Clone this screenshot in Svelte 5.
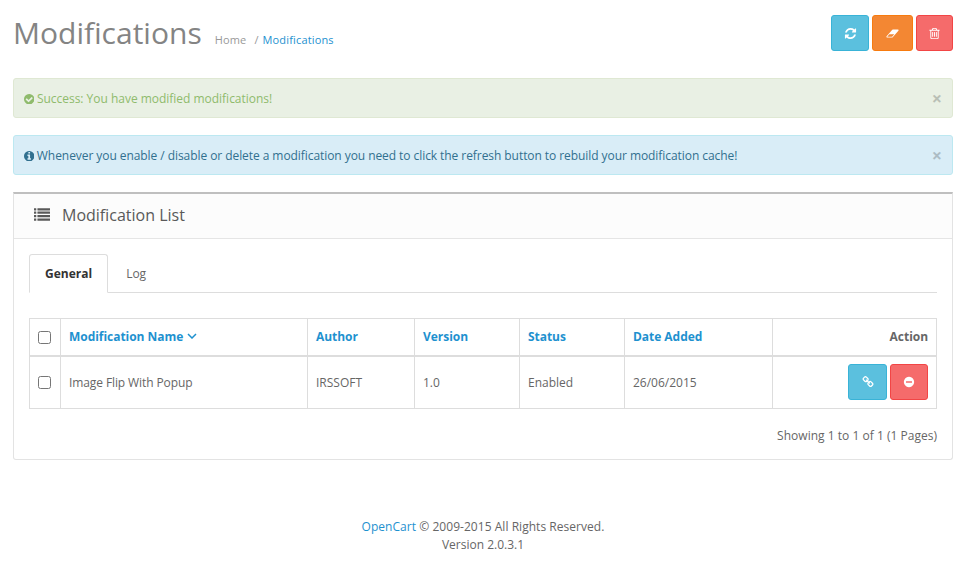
<script>
  const icons = {
    check: 'M1412 734q0-28-18-46l-91-90q-19-19-45-19t-45 19l-408 407-226-226q-19-19-45-19t-45 19l-91 90q-18 18-18 46 0 27 18 45l362 362q19 19 45 19 27 0 46-19l543-543q18-18 18-45zm252 162q0 209-103 385.500t-279.500 279.500-385.500 103-385.500-103-279.500-279.500-103-385.500 103-385.500 279.500-279.500 385.500-103 385.500 103 279.500 279.500 103 385.500z',
    info: 'M1152 1376v-160q0-14-9-23t-23-9h-96v-512q0-14-9-23t-23-9h-320q-14 0-23 9t-9 23v160q0 14 9 23t23 9h96v320h-96q-14 0-23 9t-9 23v160q0 14 9 23t23 9h448q14 0 23-9t9-23zm-128-896v-160q0-14-9-23t-23-9h-192q-14 0-23 9t-9 23v160q0 14 9 23t23 9h192q14 0 23-9t9-23zm640 416q0 209-103 385.500t-279.500 279.500-385.500 103-385.500-103-279.500-279.500-103-385.500 103-385.500 279.500-279.500 385.500-103 385.500 103 279.500 279.500 103 385.500z',
    minus: 'M1344 960v-128q0-26-19-45t-45-19h-768q-26 0-45 19t-19 45v128q0 26 19 45t45 19h768q26 0 45-19t19-45zm320-64q0 209-103 385.500t-279.500 279.500-385.500 103-385.500-103-279.500-279.500-103-385.500 103-385.500 279.500-279.500 385.500-103 385.500 103 279.500 279.500 103 385.500z',
    refresh: 'M1639 1056q0 5-1 7-64 268-268 434.500t-478 166.500q-146 0-282.500-55t-243.500-157l-129 129q-19 19-45 19t-45-19-19-45v-448q0-26 19-45t45-19h448q26 0 45 19t19 45-19 45l-137 137q71 66 161 102t187 36q134 0 250-65t186-179q11-17 53-117 8-23 30-23h192q13 0 22.500 9.500t9.500 22.500zm25-800v448q0 26-19 45t-45 19h-448q-26 0-45-19t-19-45 19-45l138-138q-148-137-349-137-134 0-250 65t-186 179q-11 17-53 117-8 23-30 23h-199q-13 0-22.500-9.500t-9.500-22.500v-7q65-268 270-434.500t480-166.500q146 0 284 55.500t245 156.500l130-129q19-19 45-19t45 19 19 45z',
    trash: 'M704 736v576q0 14-9 23t-23 9h-64q-14 0-23-9t-9-23v-576q0-14 9-23t23-9h64q14 0 23 9t9 23zm256 0v576q0 14-9 23t-23 9h-64q-14 0-23-9t-9-23v-576q0-14 9-23t23-9h64q14 0 23 9t9 23zm256 0v576q0 14-9 23t-23 9h-64q-14 0-23-9t-9-23v-576q0-14 9-23t23-9h64q14 0 23 9t9 23zm128 724v-948h-896v948q0 22 7 40.500t14.500 27 10.500 8.500h832q3 0 10.500-8.500t14.500-27 7-40.500zm-672-1076h448l-48-117q-7-9-17-11h-317q-10 2-17 11zm928 32v64q0 14-9 23t-23 9h-96v948q0 83-47 143.500t-113 60.500h-832q-66 0-113-58.500t-47-141.500v-952h-96q-14 0-23-9t-9-23v-64q0-14 9-23t23-9h309l70-167q15-37 54-63t79-26h320q40 0 79 26t54 63l70 167h309q14 0 23 9t9 23z',
    link: 'M1520 1216q0-40-28-68l-208-208q-28-28-68-28-42 0-72 32 3 3 19 18.500t21.500 21.500 15 19 13 25.500 3.500 27.500q0 40-28 68t-68 28q-15 0-27.500-3.500t-25.500-13-19-15-21.500-21.500-18.500-19q-33 31-33 73 0 40 28 68l206 207q27 27 68 27 40 0 68-26l147-146q28-28 28-67zm-703-705q0-40-28-68l-206-207q-28-28-68-28-39 0-68 27l-147 146q-28 28-28 67 0 40 28 68l208 208q27 27 68 27 42 0 72-31-3-3-19-18.500t-21.500-21.500-15-19-13-25.500-3.500-27.500q0-40 28-68t68-28q15 0 27.500 3.500t25.500 13 19 15 21.500 21.500 18.500 19q33-31 33-73zm895 705q0 120-85 203l-147 146q-83 83-203 83-121 0-204-85l-206-207q-83-83-83-203 0-123 88-209l-88-88q-86 88-208 88-120 0-204-84l-208-208q-84-84-84-204t85-203l147-146q83-83 203-83 121 0 204 85l206 207q83 83 83 203 0 123-88 209l88 88q86-88 208-88 120 0 204 84l208 208q84 84 84 204z',
    eraser: 'M960 1408l336-384h-768l-336 384h768zm1013-1077q15 34 9.500 71.500t-30.500 65.500l-896 1024q-38 44-96 44h-768q-38 0-69.500-20.500t-47.500-54.500q-15-34-9.500-71.500t30.500-65.500l896-1024q38-44 96-44h768q38 0 70 20.500t47 54.500z',
    list: 'M256 1312v192q0 13-9.500 22.500t-22.500 9.500h-192q-13 0-22.500-9.500t-9.500-22.500v-192q0-13 9.500-22.500t22.500-9.500h192q13 0 22.500 9.500t9.500 22.500zm0-384v192q0 13-9.500 22.500t-22.500 9.500h-192q-13 0-22.500-9.500t-9.500-22.500v-192q0-13 9.500-22.500t22.500-9.500h192q13 0 22.500 9.500t9.500 22.500zm0-384v192q0 13-9.500 22.500t-22.500 9.500h-192q-13 0-22.500-9.500t-9.500-22.500v-192q0-13 9.500-22.500t22.500-9.500h192q13 0 22.500 9.500t9.500 22.500zm1536 768v192q0 13-9.500 22.500t-22.500 9.500h-1344q-13 0-22.500-9.500t-9.500-22.500v-192q0-13 9.500-22.500t22.500-9.500h1344q13 0 22.500 9.500t9.500 22.500zm-1536-1152v192q0 13-9.500 22.500t-22.500 9.500h-192q-13 0-22.500-9.500t-9.500-22.500v-192q0-13 9.500-22.500t22.500-9.500h192q13 0 22.500 9.500t9.500 22.500zm1536 768v192q0 13-9.500 22.500t-22.500 9.500h-1344q-13 0-22.500-9.500t-9.500-22.500v-192q0-13 9.500-22.500t22.500-9.500h1344q13 0 22.500 9.500t9.500 22.500zm0-384v192q0 13-9.500 22.500t-22.500 9.500h-1344q-13 0-22.500-9.500t-9.500-22.500v-192q0-13 9.500-22.500t22.500-9.500h1344q13 0 22.500 9.500t9.500 22.500zm0-384v192q0 13-9.500 22.500t-22.500 9.500h-1344q-13 0-22.500-9.500t-9.500-22.500v-192q0-13 9.500-22.500t22.500-9.500h1344q13 0 22.500 9.500t9.500 22.500z'
  };
  const heads = ['Author', 'Version', 'Status', 'Date Added'];
  const cells = ['IRSSOFT', '1.0', 'Enabled', '26/06/2015'];
  const circle = '128 128 1536 1536';
</script>

{#snippet icon(name, cls, box = '0 0 1792 1792')}
  <svg class="ic {cls}" viewBox={box} aria-hidden="true"><path d={icons[name]} fill="currentColor" /></svg>
{/snippet}

<div class="page">
  <header class="head">
    <div class="title">
      <h1>Modifications</h1>
      <nav class="crumb">
        <a class="home" href="#a">Home</a>
        <span class="sep">/</span>
        <a href="#a">Modifications</a>
      </nav>
    </div>
    <div class="tools">
      <button class="btn info">{@render icon('refresh', 'i13')}</button>
      <button class="btn warn">{@render icon('eraser', 'i13', '0 0 2048 1792')}</button>
      <button class="btn danger">{@render icon('trash', 'i13')}</button>
    </div>
  </header>

  <div class="alert ok">
    <span class="msg">{@render icon('check', 'dot', circle)} Success: You have modified modifications!</span>
    <span class="close">×</span>
  </div>
  <div class="alert note">
    <span class="msg">{@render icon('info', 'dot', circle)} Whenever you enable / disable or delete a modification you need to click the refresh button to rebuild your modification cache!</span>
    <span class="close">×</span>
  </div>

  <section class="panel">
    <div class="panel-head">
      {@render icon('list', 'i16')}
      <h3>Modification List</h3>
    </div>
    <div class="panel-body">
      <ul class="tabs">
        <li class="active">General</li>
        <li>Log</li>
      </ul>
      <table>
        <thead>
          <tr>
            <th class="c0"><input type="checkbox" /></th>
            <th class="c1"><a href="#a">Modification Name <svg class="chev" viewBox="0 0 10 6"><path d="M1 1l4 4 4-4" fill="none" stroke="currentColor" stroke-width="1.5" /></svg></a></th>
            {#each heads as h, i}
              <th class={'c' + (i + 2)}><a href="#a">{h}</a></th>
            {/each}
            <th class="right">Action</th>
          </tr>
        </thead>
        <tbody>
          <tr>
            <td class="c0"><input type="checkbox" /></td>
            <td class="name">Image Flip With Popup</td>
            {#each cells as c}
              <td>{c}</td>
            {/each}
            <td class="right acts">
              <button class="btn info small">{@render icon('link', 'i12')}</button>
              <button class="btn danger tiny">{@render icon('minus', 'i12')}</button>
            </td>
          </tr>
        </tbody>
      </table>
      <p class="count">Showing 1 to 1 of 1 (1 Pages)</p>
    </div>
  </section>

  <footer>
    <div class="copy"><a href="#a">OpenCart</a> © 2009-2015 All Rights Reserved.</div>
    <div>Version 2.0.3.1</div>
  </footer>
</div>

<style>
  :global(body) {
    margin: 0;
    background: #fff;
    font-family: "Open Sans", sans-serif;
    font-size: 12px;
    line-height: 18px;
    color: #666;
  }
  a { color: #1e91cf; text-decoration: none; }
  .page { padding: 15px 1px 0 13px; }
  .head { display: flex; justify-content: space-between; height: 63px; }
  .title { display: flex; align-items: baseline; }
  h1 { margin: 0; font-size: 30px; font-weight: 400; line-height: 36px; color: #848484; }
  .crumb { margin-left: 13px; font-size: 11px; letter-spacing: 0.15px; display: flex; }
  .crumb .home { color: #999; }
  .crumb .sep { color: #999; margin: 0 4px 0 8px; }
  .tools { display: flex; gap: 3px; align-items: flex-start; }
  .btn {
    display: inline-flex;
    align-items: center;
    justify-content: center;
    height: 36px;
    padding: 0;
    border-radius: 3px;
    border: 1px solid;
    color: #fff;
  }
  .tools .info { width: 38px; }
  .tools .warn { width: 41px; }
  .tools .danger { width: 37px; }
  .info { background: #5bc0de; border-color: #39b3d7; }
  .warn { background: #f38733; border-color: #f77b0e; }
  .danger { background: #f56b6b; border-color: #f24545; }
  .ic { display: inline-block; flex: none; }
  .i12 { width: 12px; height: 12px; }
  .i13 { width: 13px; height: 13px; }
  .i16 { width: 16px; height: 16px; }
  .dot { width: 10.4px; height: 10.4px; vertical-align: -1px; margin-right: -0.6px; }
  .alert {
    display: flex;
    justify-content: space-between;
    align-items: center;
    box-sizing: border-box;
    height: 40px;
    margin-bottom: 17px;
    padding: 2px 10px 0 10px;
    border: 1px solid;
    border-radius: 3px;
  }
  .ok { background: #e9f0e4; border-color: #dfe8d3; color: #8fbb6c; letter-spacing: -0.02px; }
  .note { background: #d9edf7; border-color: #bce8f1; color: #31708f; letter-spacing: -0.065px; }
  .close { margin-top: -2px; font-size: 18px; font-weight: 700; line-height: 18px; color: #000; opacity: 0.2; }
  .panel {
    box-sizing: border-box;
    height: 268px;
    border: 1px solid #e3e3e3;
    border-top: 2px solid #bfbfbf;
    border-radius: 0 0 3px 3px;
  }
  .panel-head {
    display: flex;
    align-items: center;
    gap: 12px;
    box-sizing: border-box;
    height: 45px;
    padding: 0 0 2px 20px;
    background: #fcfcfc;
    border-bottom: 1px solid #e5e5e5;
    color: #595959;
  }
  h3 { margin: 0; font-size: 16px; font-weight: 400; color: #595959; }
  .panel-body { padding: 15px; }
  .tabs {
    display: flex;
    gap: 2px;
    list-style: none;
    margin: 0 0 25px;
    padding: 0;
    height: 39px;
    box-sizing: border-box;
    border-bottom: 1px solid #ddd;
  }
  .tabs li {
    box-sizing: border-box;
    height: 39px;
    padding: 10px 15px;
    border: 1px solid transparent;
    border-radius: 3px 3px 0 0;
  }
  .tabs .active {
    font-weight: 700;
    color: #333;
    background: #fff;
    border-color: #ddd #ddd #fff;
  }
  table { width: 908px; border-collapse: collapse; table-layout: fixed; }
  th, td { border: 1px solid #ddd; padding: 0 8px; text-align: left; box-sizing: border-box; }
  th { height: 37px; border-bottom-width: 2px; font-weight: 700; letter-spacing: -0.04px; }
  td { height: 53px; padding-top: 2px; }
  td.acts { padding-top: 0; }
  .c0 { width: 31px; padding: 0 1px 0 0; text-align: center; }
  td.c0 { padding: 0 1px 2px 0; }
  .c1 { width: 247px; }
  .c2 { width: 107px; }
  .c3, .c4 { width: 105px; }
  .c5 { width: 148px; }
  .right { text-align: right; }
  .name { letter-spacing: -0.1px; }
  input { width: 13px; height: 13px; margin: 0; vertical-align: middle; }
  .chev { width: 10px; height: 6px; vertical-align: 2px; margin-left: 1px; }
  .acts { white-space: nowrap; font-size: 0; }
  .small { width: 39px; }
  .tiny { width: 38px; margin-left: 3px; }
  .count { margin: 18px 0 0; text-align: right; letter-spacing: 0.02px; }
  footer { margin-top: 58px; text-align: center; }
  .copy { letter-spacing: 0.04px; }
</style>
